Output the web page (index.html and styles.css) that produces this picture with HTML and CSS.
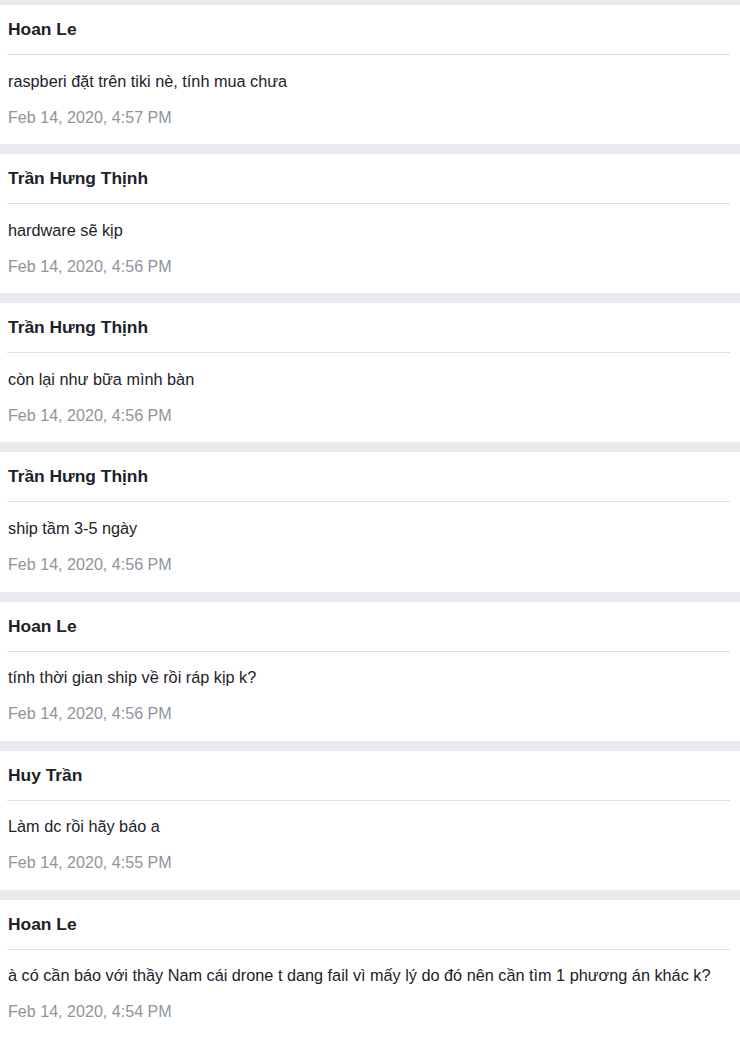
FILE: index.html
```html
<!DOCTYPE html>
<html lang="vi">
<head>
<meta charset="utf-8">
<title>Comments</title>
<link rel="stylesheet" href="styles.css">
</head>
<body>
<div class="feed">
  <div class="card">
    <div class="card-head"><span class="name">Hoan Le</span></div>
    <div class="msg">raspberi đặt trên tiki nè, tính mua chưa</div>
    <div class="time">Feb 14, 2020, 4:57 PM</div>
  </div>
  <div class="card">
    <div class="card-head"><span class="name">Trần Hưng Thịnh</span></div>
    <div class="msg">hardware sẽ kịp</div>
    <div class="time">Feb 14, 2020, 4:56 PM</div>
  </div>
  <div class="card">
    <div class="card-head"><span class="name">Trần Hưng Thịnh</span></div>
    <div class="msg">còn lại như bữa mình bàn</div>
    <div class="time">Feb 14, 2020, 4:56 PM</div>
  </div>
  <div class="card">
    <div class="card-head"><span class="name">Trần Hưng Thịnh</span></div>
    <div class="msg">ship tầm 3-5 ngày</div>
    <div class="time">Feb 14, 2020, 4:56 PM</div>
  </div>
  <div class="card">
    <div class="card-head"><span class="name">Hoan Le</span></div>
    <div class="msg">tính thời gian ship về rồi ráp kịp k?</div>
    <div class="time">Feb 14, 2020, 4:56 PM</div>
  </div>
  <div class="card">
    <div class="card-head"><span class="name">Huy Trần</span></div>
    <div class="msg">Làm dc rồi hãy báo a</div>
    <div class="time">Feb 14, 2020, 4:55 PM</div>
  </div>
  <div class="card">
    <div class="card-head"><span class="name">Hoan Le</span></div>
    <div class="msg">à có cần báo với thầy Nam cái drone t dang fail vì mấy lý do đó nên cần tìm 1 phương án khác k?</div>
    <div class="time">Feb 14, 2020, 4:54 PM</div>
  </div>
</div>
</body>
</html>
```
FILE: styles.css
```css
html, body {
  margin: 0;
  padding: 0;
}
body {
  background: #e9ebee;
  font-family: "Liberation Sans", Arial, sans-serif;
  color: #1d2129;
}
.feed {
  display: flex;
  flex-direction: column;
  gap: 10px;
  padding-top: 5px;
}
.card {
  background: #ffffff;
  padding: 14px 10px 17.67px 7px;
}
.card-head {
  padding-bottom: 15px;
  border-bottom: 1px solid #dddfe2;
}
.name {
  display: block;
  padding-left: 1px;
  font-size: 17.4px;
  font-weight: bold;
  line-height: 20px;
}
.msg {
  margin-top: 15.5px;
  padding-left: 1px;
  font-size: 16.25px;
  line-height: 20px;
}
.time {
  margin-top: 16px;
  padding-left: 1px;
  font-size: 16.1px;
  line-height: 20px;
  color: #90949c;
}
```
